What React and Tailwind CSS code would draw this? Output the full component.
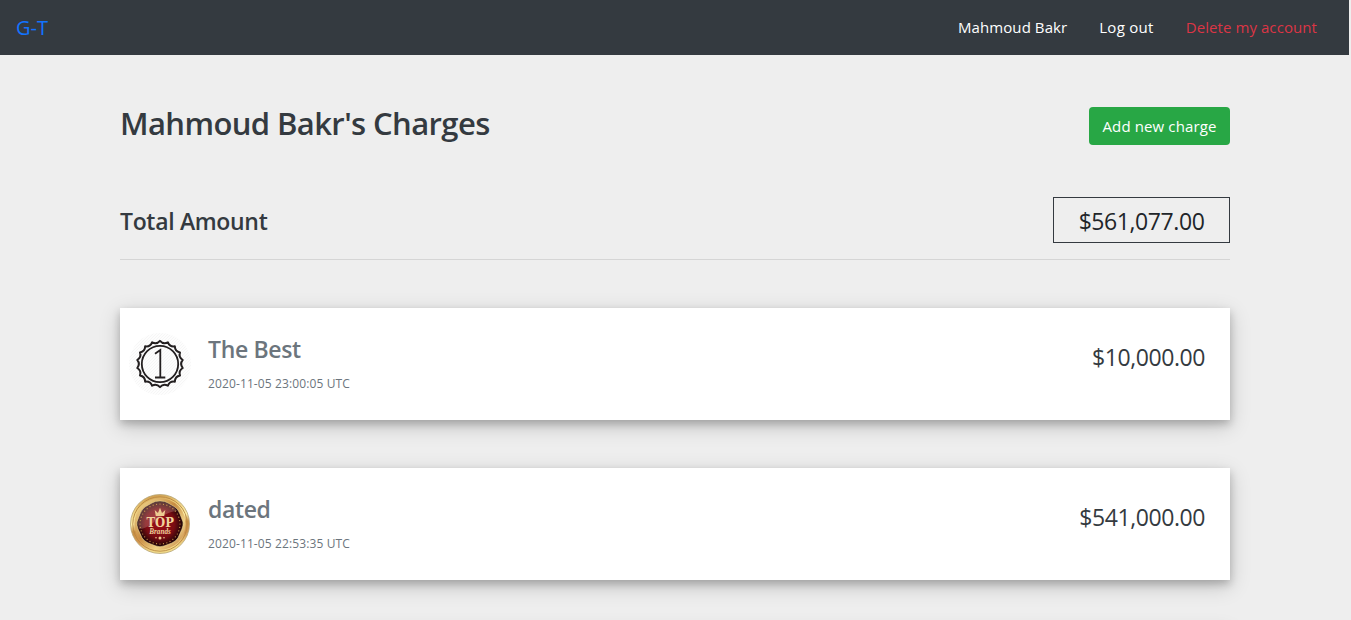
const SCALLOPS = Array.from({ length: 18 }, (_, i) => {
  const a0 = (i * 20 * Math.PI) / 180;
  const a1 = ((i + 1) * 20 * Math.PI) / 180;
  const am = (a0 + a1) / 2;
  const p = (r, a) => `${(32 + r * Math.sin(a)).toFixed(2)} ${(32 - r * Math.cos(a)).toFixed(2)}`;
  return `${i === 0 ? `M${p(23.1, a0)}` : ''}Q${p(19.5, am)} ${p(23.1, a1)}`;
}).join('') + 'Z';

const DOTS = Array.from({ length: 36 }, (_, i) => {
  const a = (i * 10 * Math.PI) / 180;
  return [30 + 20 * Math.cos(a), 30 + 20 * Math.sin(a)];
});

function FirstBadge() {
  return (
    <svg viewBox="0 0 64 64" className="size-16 shrink-0" fill="none" stroke="#231f20" aria-hidden="true">
      <defs>
        <pattern id="hatch" width="3" height="3" patternUnits="userSpaceOnUse">
          <path d="M0 3L3 0" stroke="#f4f4f4" strokeWidth="0.7" />
        </pattern>
      </defs>
      <circle cx="32" cy="32" r="31" fill="#fdfdfd" stroke="none" />
      <circle cx="32" cy="32" r="31" fill="url(#hatch)" stroke="none" />
      <path d={SCALLOPS} strokeWidth="2" strokeLinejoin="round" />
      <circle cx="32" cy="32" r="18.2" strokeWidth="1.8" />
      <path d="M27 21.7L32.3 18V45.2M27 45.5H37.3" strokeWidth="1.8" />
    </svg>
  );
}

function TopBrandsBadge() {
  return (
    <svg viewBox="0 0 60 60" className="size-[60px] shrink-0" aria-hidden="true">
      <defs>
        <linearGradient id="gold" x1="0" y1="0" x2="0.2" y2="1">
          <stop offset="0" stopColor="#c58b3c" />
          <stop offset="0.25" stopColor="#e9c774" />
          <stop offset="0.5" stopColor="#fff3ae" />
          <stop offset="0.62" stopColor="#c98f43" />
          <stop offset="0.8" stopColor="#d39650" />
          <stop offset="1" stopColor="#f3dc8a" />
        </linearGradient>
        <linearGradient id="goldInner" x1="0" y1="0" x2="1" y2="1">
          <stop offset="0" stopColor="#f7e29a" />
          <stop offset="0.45" stopColor="#c88c42" />
          <stop offset="0.7" stopColor="#efd084" />
          <stop offset="1" stopColor="#b9753a" />
        </linearGradient>
        <radialGradient id="ruby" cx="0.5" cy="0.5" r="0.52">
          <stop offset="0" stopColor="#a01018" />
          <stop offset="0.6" stopColor="#780c12" />
          <stop offset="1" stopColor="#0d0405" />
        </radialGradient>
        <linearGradient id="gloss" x1="0" y1="0" x2="0.7" y2="1">
          <stop offset="0" stopColor="#f3c5bd" stopOpacity="0.3" />
          <stop offset="1" stopColor="#f3c5bd" stopOpacity="0.22" />
        </linearGradient>
      </defs>
      <circle cx="30" cy="30" r="29.5" fill="url(#gold)" stroke="#b5a477" strokeWidth="0.8" />
      <circle cx="30" cy="30" r="27.2" fill="none" stroke="#b88743" strokeWidth="0.9" />
      <circle cx="30" cy="30" r="25.7" fill="url(#goldInner)" />
      <path
        d="M30 7Q35 7 38 9L45 13Q48 15 50 20L53 28Q53.5 31 52 35L48 44Q46 47 42 49L34 52Q30 53.5 26 52L18 49Q14 47 12 44L8 35Q6.5 31 7 28L10 20Q12 15 15 13L22 9Q25 7 30 7Z"
        fill="url(#ruby)"
        stroke="#f6df9a"
        strokeWidth="0.6"
      />
      <path d="M30 7.5Q35 7.5 38 9.5L45 13.5L47 17C37 18 28 24 23 29C18 33 13 35 9 35L7.5 29L10.5 20Q12 15 15 13.5L22 9.5Q25 7.5 30 7.5Z" fill="url(#gloss)" />
      {DOTS.map(([x, y], i) => (
        <circle key={i} cx={x} cy={y} r="0.6" fill="#d3a04f" />
      ))}
      <path d="M25.8 22L24.7 16L28 19L30 13.7L32 19L35.3 16L34.2 22Z" fill="#eccb91" />
      <g fill="#f0d29c" textAnchor="middle" fontWeight="700">
        <text x="30.2" y="32.8" fontSize="12" textLength="27.5" lengthAdjust="spacingAndGlyphs" fontFamily="'DejaVu Serif', serif">TOP</text>
        <text x="30" y="40.3" fontSize="8" fontStyle="italic" textLength="21.5" lengthAdjust="spacingAndGlyphs" fontFamily="'Liberation Serif', serif">Brands</text>
      </g>
      <g fill="#eccb91">
        <circle cx="26" cy="43.8" r="0.8" />
        <circle cx="30" cy="43.9" r="1.5" />
        <circle cx="34" cy="43.8" r="0.8" />
      </g>
    </svg>
  );
}

function Card({ badge, name, date, amount }) {
  return (
    <article className="flex h-28 shrink-0 items-start bg-white pr-[25px] shadow-[0_4px_8px_0_rgba(0,0,0,0.2),0_6px_20px_0_rgba(0,0,0,0.19)]">
      <div className="flex h-full w-20 shrink-0 items-center justify-center">{badge}</div>
      <div className="flex-1 pt-[27px] pl-2">
        <h3 className="text-[23px] leading-[29px] font-semibold tracking-[-0.35px] text-[#6c757d]">{name}</h3>
        <p className="mt-[11px] text-[12px] leading-[18px] tracking-[0.12px] text-[#6c757d]">{date}</p>
      </div>
      <p className="pt-[31px] text-[23px] leading-9 tracking-[-0.42px] text-[#343a40]">{amount}</p>
    </article>
  );
}

export default function App() {
  return (
    <div className="h-[620px] overflow-hidden bg-[#eee] font-['Open_Sans',sans-serif] text-[#343a40]">
      <nav className="mr-0.5 flex h-[55px] items-center justify-between bg-[#343a40] pr-8 pl-4">
        <a className="text-[20px] leading-[30px] text-[#1273ff]">G-T</a>
        <div className="-mt-0.5 flex gap-8 text-[15px] leading-6 tracking-[0.08px] text-white">
          <a>Mahmoud Bakr</a>
          <a className="tracking-[0.28px]">Log out</a>
          <a className="text-[#dc3545]">Delete my account</a>
        </div>
      </nav>
      <main className="ml-[120px] flex w-[1110px] flex-col">
        <header className="flex items-start justify-between pt-[52px]">
          <h1 className="-mt-[5px] text-[31px] leading-[42px] font-semibold tracking-[-0.6px]">Mahmoud Bakr's Charges</h1>
          <button className="h-[38px] w-[141px] rounded-[4px] bg-[#28a745] text-[15px] tracking-[0.12px] whitespace-nowrap text-white">Add new charge</button>
        </header>
        <section className="mt-[52px] flex h-[63px] items-start justify-between border-b border-[#d5d5d5]">
          <h2 className="pt-2 text-[23px] leading-8 font-semibold tracking-[-0.33px]">Total Amount</h2>
          <p className="h-[46px] w-[177px] border border-[#343a40] text-center text-[23px] leading-[47px] tracking-[-0.42px] text-[#212529]">$561,077.00</p>
        </section>
        <div className="mt-12 flex flex-col gap-12">
          <Card badge={<FirstBadge />} name="The Best" date="2020-11-05 23:00:05 UTC" amount="$10,000.00" />
          <Card badge={<TopBrandsBadge />} name="dated" date="2020-11-05 22:53:35 UTC" amount="$541,000.00" />
          <Card />
        </div>
      </main>
    </div>
  );
}
